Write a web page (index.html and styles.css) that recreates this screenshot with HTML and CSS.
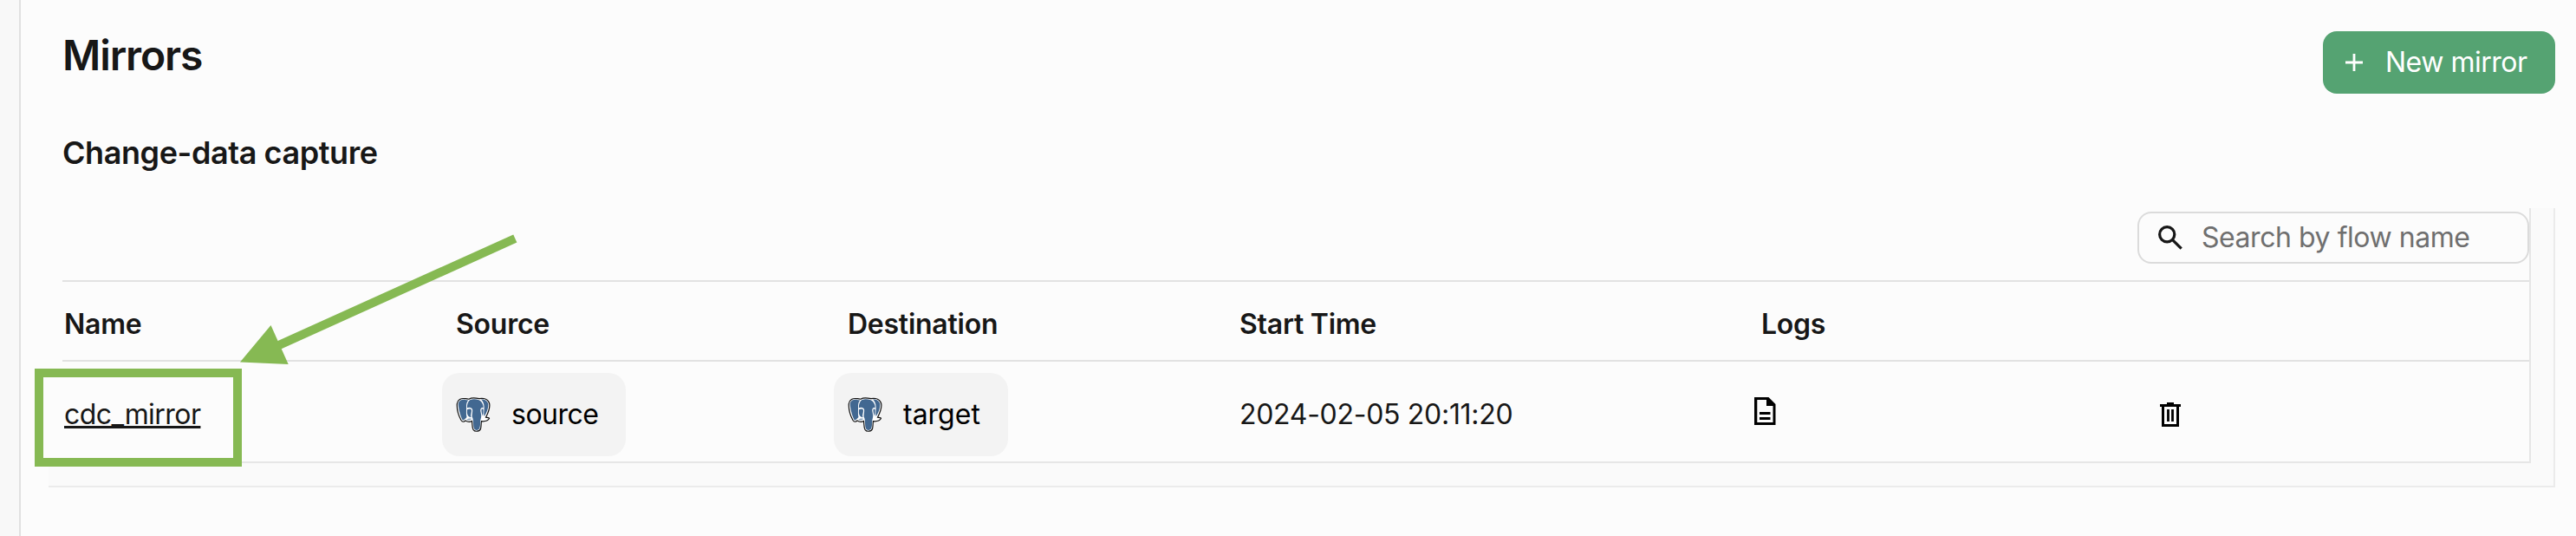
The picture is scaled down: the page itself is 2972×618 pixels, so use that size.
FILE: index.html
```html
<!DOCTYPE html>
<html lang="en">
<head>
<meta charset="utf-8">
<title>Mirrors</title>
<link rel="stylesheet" href="styles.css">
</head>
<body>
<svg class="defs" aria-hidden="true">
  <symbol id="postgres" viewBox="0 0 40 40">
    <path d="M10 1.700C6 .9 2 3 1.300 7.500C1 13 3 21 6 26.500C7.500 29 9.500 28.500 11 27C13.500 28.500 16 28.700 18.500 27.500C19 31 18.500 34.500 20 37.300C22 40.300 27.500 39.800 28.600 36C29.300 33 29 30 29.500 27.700C33 28 37 27 38.500 24.500C38.500 23.200 36 23.400 34.500 23.200C37 18.500 39.500 12 38.700 7.500C37.500 2.500 32.500 .7 27 1.700C22 .6 17 .8 15 2.200C13 1.600 11.500 1.500 10 1.700Z" fill="#fff" stroke="#111" stroke-width="1.200"/>
    <path d="M10.500 3C6 2.100 2.800 4.500 2.700 8.200C3 13 5 21 7.300 25.700C8.500 27.500 9.500 26 12.500 23C11.500 20 12.200 15 12 11.500C11.800 8 12.600 5 14.300 3.400Z" fill="#426891"/>
    <path d="M29 2.600C33 2.100 36.600 4.300 37.400 8C37.600 12.500 35.500 18 32.800 22C31.800 20 32.800 15 32.600 11C32.500 7 31 4.500 29 2.600Z" fill="#426891"/>
    <path d="M16.500 3.100C20 1.500 27 1.800 29.300 5.300C31.400 8 31.800 10 31.600 12.300C29 11.300 28 13.500 28.300 16C28.800 19 29.700 21 29 23.500C27.700 27 28.500 32 27.400 35.500C26.300 38.700 21.600 38.700 20.700 35.500C19.800 32 20.300 26 19.100 23.500C17.800 21.500 19.500 18 19.100 14.300C18.800 12 15.500 11 12.900 12.300C12.700 8 14 4.800 16.500 3.100Z" fill="#426891"/>
    <path d="M13 14.200C14.800 13.200 17.700 13 17.900 15C18.200 18 16.300 20.500 17.600 23.200C15 23 13 21 12.900 18Z" fill="#426891"/>
    <path d="M29.600 13.800C30.600 13.200 31.600 13.500 31.600 14.500C31.700 17 31.600 19.500 30.800 21.500C29.800 18.500 29.200 16 29.600 13.800Z" fill="#426891"/>
    <path d="M12 26C13.500 24.500 15.500 24 18 24.700C17.500 26.500 14.500 27 12 26Z" fill="#8fa6be"/>
  </symbol>
</svg>
<div class="app">
  <aside class="sidebar"></aside>
  <main class="main">
    <header class="topbar">
      <h1 class="title">Mirrors</h1>
      <button class="new-btn">
        <svg width="20" height="20" viewBox="0 0 20 20"><path d="M10 0V20M0 10H20" stroke="#fff" stroke-width="2.800"/></svg>
        New mirror
      </button>
    </header>
    <h2 class="subtitle">Change-data capture</h2>
    <section class="frame">
      <div class="panel">
        <div class="toolbar">
          <label class="search">
            <svg width="28" height="28" viewBox="0 0 28 28" fill="none" stroke="#171717" stroke-width="3.200"><circle cx="10.200" cy="10.200" r="8.600"/><path d="M16.300 16.300L26.700 26.700"/></svg>
            <span>Search by flow name</span>
          </label>
        </div>
        <div class="row head">
          <div>Name</div><div>Source</div><div>Destination</div><div>Start Time</div><div class="logs-head">Logs</div><div></div>
        </div>
        <div class="row body">
          <div><a class="link">cdc_mirror</a></div>
          <div><span class="chip chip-source"><svg width="40" height="40"><use href="#postgres"/></svg>source</span></div>
          <div><span class="chip"><svg width="40" height="40"><use href="#postgres"/></svg>target</span></div>
          <div class="time">2024-02-05 20:11:20</div>
          <div class="logs-cell"><svg width="25" height="32" viewBox="0 0 25 32"><path d="M0 0H16.500L24.500 8V32H0ZM3.300 3V29H21.500V10H14V3Z" fill="#000" fill-rule="evenodd"/><path d="M6 18.500H18.500M6 24.500H18.500" stroke="#000" stroke-width="3"/></svg></div>
          <div class="drop-cell"><svg width="24" height="28" viewBox="0 0 24 28"><path d="M8 0H16V2H24V5H22V28H2V5H0V2H8ZM5 5V25H19V5Z" fill="#000" fill-rule="evenodd"/><path d="M9.500 8V22M14.500 8V22" stroke="#000" stroke-width="2.800"/></svg></div>
        </div>
      </div>
    </section>
  </main>
</div>
<div class="highlight"></div>
<svg class="arrow" width="330" height="160" viewBox="0 0 330 160">
  <path d="M324.300 15L46 140.600" stroke="#86b953" stroke-width="10"/>
  <path d="M7 157.600L42.500 115L62.700 160Z" fill="#86b953"/>
</svg>
</body>
</html>
```
FILE: styles.css
```css
* { box-sizing: border-box; }
body {
  margin: 0;
  background: #fcfcfc;
  color: #171717;
  font: 400 32px/48px Inter, sans-serif;
}
.defs { position: absolute; width: 0; height: 0; }
.app { display: flex; height: 618px; overflow: hidden; }
.sidebar { width: 24px; flex: none; background: #f8f8f8; border-right: 2px solid #e0e0e0; }
.main { flex: 1; padding: 36px 24px 0 32px; }
.topbar { display: flex; justify-content: space-between; height: 72px; padding-left: 16px; }
.title { margin: 0; font-size: 48px; line-height: 56px; font-weight: 600; letter-spacing: -1.1px; }
.new-btn {
  display: flex; align-items: center; gap: 26px;
  width: 268px; height: 72px; padding: 0 0 0 26px;
  border: 0; border-radius: 16px;
  background: #55a372; color: #fff;
  font: inherit; letter-spacing: -0.5px; white-space: nowrap;
}
.subtitle { margin: 44px 0 0 16px; font-size: 36px; line-height: 48px; font-weight: 600; letter-spacing: -0.42px; }
.frame {
  margin-top: 40px; height: 322px;
  padding-right: 26px;
  background: #fafafa;
  border: solid #ebebeb; border-width: 0 2px 2px 0;
}
.panel {
  height: 294px; padding-left: 16px;
  background: #fcfcfc;
  border: solid #e6e6e6; border-width: 0 2px 2px 0;
}
.toolbar { display: flex; justify-content: flex-end; height: 83px; padding-top: 4px; }
.search {
  display: flex; align-items: center; gap: 22px;
  width: 452px; height: 60px; padding-left: 22px;
  border: 2px solid #dbdbdb; border-radius: 16px;
  color: #6f6f6f; letter-spacing: -0.45px; white-space: nowrap;
}
.row {
  display: grid; grid-template-columns: repeat(5, 452px) 1fr; align-items: center;
  padding-left: 2px; border-top: 2px solid #e2e2e2;
}
.head { height: 92px; padding-top: 8px; font-weight: 600; letter-spacing: -0.25px; }
.body { height: 117px; padding-top: 6px; }
.logs-head { padding-left: 150px; }
.logs-cell { display: flex; padding: 0 0 8px 142px; }
.drop-cell { display: flex; padding: 0 0 0 158px; }
.time { letter-spacing: -0.3px; }
.link {
  letter-spacing: -0.55px;
  text-decoration: underline; text-decoration-thickness: 3px;
  text-underline-offset: 2px; text-decoration-skip-ink: none;
}
.chip {
  display: inline-flex; align-items: center; gap: 24px;
  height: 96px; margin-left: -16px; padding: 0 32px 0 16px;
  vertical-align: top;
  border-radius: 20px; background: #f3f3f3; color: #000;
}
.chip-source { letter-spacing: -0.5px; }
.highlight { position: absolute; left: 40px; top: 425px; width: 239px; height: 113px; border: 10px solid #86b953; }
.arrow { position: absolute; left: 270px; top: 260px; }
```
